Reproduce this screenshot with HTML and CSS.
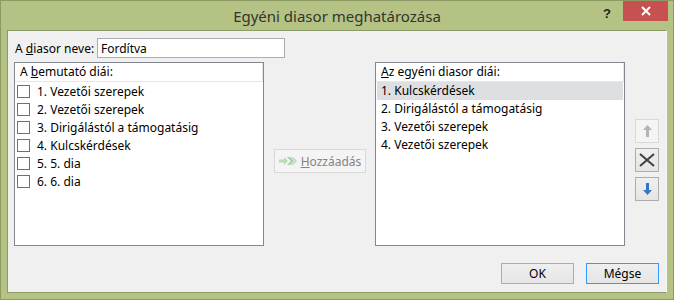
FILE: index.html
```html
<!DOCTYPE html>
<html lang="hu">
  <head>
    <meta charset="UTF-8" />
    <title>Egyéni diasor meghatározása</title>
    <link rel="stylesheet" href="styles.css">
  </head>
  <body>
    <div class="window">
      <div class="titlebar">
        <div></div>
        <div class="title">Egyéni diasor meghatározása</div>
        <div class="caption-btns">
          <span class="help">?</span>
          <span class="close">
            <svg width="10" height="10" viewBox="0 0 10 10"><path d="M1 1 L9 9 M9 1 L1 9" stroke="#fff" stroke-width="2"/></svg>
          </span>
        </div>
      </div>
      <div class="client">
        <div class="name-row">
          <label for="name">A <u>d</u>iasor neve:</label>
          <input type="text" id="name" value="Fordítva" />
        </div>
        <div class="main-row">
          <div class="listbox">
            <div class="list-head">A <u>b</u>emutató diái:</div>
            <div class="item"><span class="check"></span>1. Vezetői szerepek</div>
            <div class="item"><span class="check"></span>2. Vezetői szerepek</div>
            <div class="item"><span class="check"></span>3. Dirigálástól a támogatásig</div>
            <div class="item"><span class="check"></span>4. Kulcskérdések</div>
            <div class="item"><span class="check"></span>5. 5. dia</div>
            <div class="item"><span class="check"></span>6. 6. dia</div>
          </div>
          <button class="btn add-btn" disabled>
            <svg width="18" height="10" viewBox="0 0 18 10">
              <path d="M0 3.5 H5 V1 L9 5 L5 9 V6.5 H0 Z" fill="#b5dcb5"/>
              <path d="M8 1 H11 L15 5 L11 9 H8 L12 5 Z" fill="#9fd19f"/>
              <path d="M12 1 H14 L18 5 L14 9 H12 L16 5 Z" fill="#b5dcb5"/>
            </svg>
            <span><u>H</u>ozzáadás</span>
          </button>
          <div class="listbox">
            <div class="list-head"><u>A</u>z egyéni diasor diái:</div>
            <div class="row selected">1. Kulcskérdések</div>
            <div class="row">2. Dirigálástól a támogatásig</div>
            <div class="row">3. Vezetői szerepek</div>
            <div class="row">4. Vezetői szerepek</div>
          </div>
          <div class="side-btns">
            <button class="btn icon-btn" disabled>
              <svg width="9" height="12" viewBox="0 0 9 12"><path d="M4.5 0 L9 5 H6 V12 H3 V5 H0 Z" fill="#b4b4b4"/></svg>
            </button>
            <button class="btn icon-btn">
              <svg width="16" height="14" viewBox="0 0 16 14"><path d="M1 1 L15 13 M15 1 L1 13" stroke="#404040" stroke-width="2"/></svg>
            </button>
            <button class="btn icon-btn">
              <svg width="9" height="12" viewBox="0 0 9 12"><path d="M4.5 12 L9 7 H6 V0 H3 V7 H0 Z" fill="#2f78c8"/></svg>
            </button>
          </div>
        </div>
        <div class="footer">
          <button class="btn">OK</button>
          <button class="btn default">Mégse</button>
        </div>
      </div>
    </div>
  </body>
</html>
```

FILE: styles.css
```css
* {
    box-sizing: border-box;
}

body {
    margin: 0;
    font-family: "Noto Sans", sans-serif;
    font-size: 12px;
    color: #000;
}

.window {
    width: 674px;
    height: 300px;
    background-color: #b4c383;
    border: 1px solid #8c9b63;
    padding: 0 6px 6px 6px;
    display: flex;
    flex-direction: column;
}

.titlebar {
    height: 29px;
    display: grid;
    grid-template-columns: 1fr auto 1fr;
    align-items: start;
}

.title {
    font-size: 15px;
    color: #333;
    padding-top: 5px;
}

.caption-btns {
    display: flex;
    justify-content: flex-end;
    align-items: flex-start;
}

.help {
    font-family: "Liberation Sans", sans-serif;
    font-weight: bold;
    font-size: 13px;
    color: #222;
    margin: 5px 12px 0 0;
}

.close {
    width: 45px;
    height: 20px;
    background-color: #c75050;
    display: flex;
    align-items: center;
    justify-content: center;
    margin-right: -1px;
}

.client {
    flex: 1;
    background-color: #f0f0f0;
    border: 1px solid #8a9a68;
    border-right-color: #f7f7f7;
    border-bottom-color: #8a9a68;
    padding: 7px 7px 8px 6px;
    display: flex;
    flex-direction: column;
}

.name-row {
    display: flex;
    align-items: center;
    height: 20px;
}

.name-row label {
    width: 82px;
    margin-left: 1px;
}

.name-row input {
    width: 188px;
    height: 20px;
    border: 1px solid #abadb3;
    font-family: inherit;
    font-size: 12px;
    padding: 0 0 0 3px;
    outline: none;
}

.main-row {
    display: flex;
    margin-top: 4px;
}

.listbox {
    width: 250px;
    height: 184px;
    background-color: #fff;
    border: 1px solid #828790;
}

.list-head {
    height: 19px;
    line-height: 17px;
    padding-left: 5px;
    border-bottom: 1px solid #e3e8ef;
    border-right: 1px solid #e3e8ef;
}

.item {
    height: 18px;
    display: flex;
    align-items: center;
    padding-left: 2px;
}

.check {
    width: 13px;
    height: 13px;
    border: 1px solid #707070;
    background-color: #fff;
    margin-right: 7px;
}

.row {
    height: 18px;
    line-height: 18px;
    padding-left: 4px;
    margin: 0 1px;
}

.row.selected {
    background-color: #dedfe3;
}

.btn {
    font-family: inherit;
    font-size: 12px;
    color: #000;
    background: linear-gradient(#efefef, #e5e5e5);
    border: 1px solid #adadad;
    padding: 0;
}

.btn:disabled {
    background: #f4f4f4;
    border-color: #d9d9d9;
    color: #838383;
}

.add-btn {
    width: 92px;
    height: 24px;
    margin: 87px 9px 0 10px;
    display: flex;
    align-items: center;
    justify-content: center;
    gap: 4px;
}

.side-btns {
    display: flex;
    flex-direction: column;
    gap: 5px;
    margin: 57px 0 0 10px;
}

.icon-btn {
    width: 24px;
    height: 24px;
    display: flex;
    align-items: center;
    justify-content: center;
}

.footer {
    display: flex;
    justify-content: flex-end;
    gap: 12px;
    margin-top: 17px;
    padding-right: 0;
}

.footer .btn {
    width: 73px;
    height: 21px;
}

.footer .btn.default {
    border-color: #3399ff;
}
```
